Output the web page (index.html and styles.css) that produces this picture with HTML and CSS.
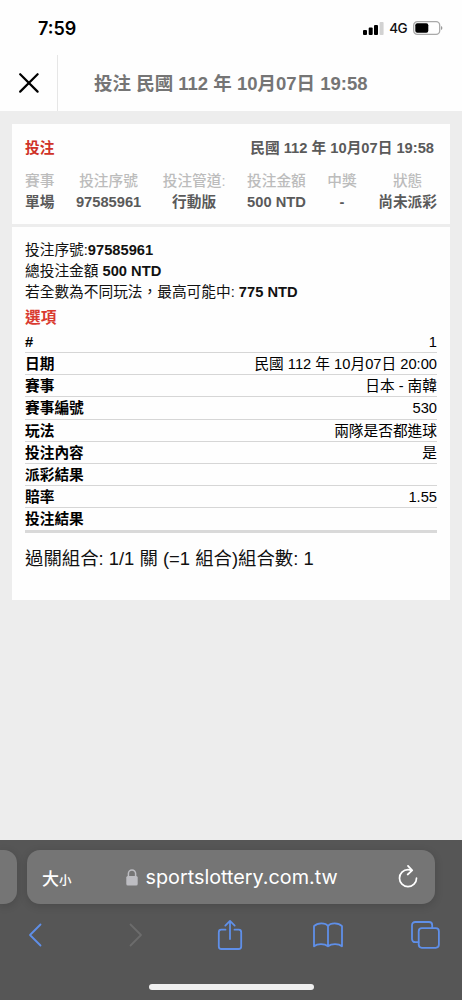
FILE: index.html
```
<!DOCTYPE html>
<html lang="zh-Hant">
<head>
    <meta charset="UTF-8">
    <meta name="viewport" content="width=device-width, initial-scale=1.0">
    <title>投注</title>
    <link rel="stylesheet" href="styles.css">
</head>
<body>
    <div class="status-bar">
        <span class="time">7:59</span>
        <div class="status-icons">
            <svg class="signal" width="21" height="14" viewBox="0 0 21 14">
                <rect x="0" y="9" width="4" height="5" rx="1"/>
                <rect x="5.7" y="6.6" width="4" height="7.4" rx="1"/>
                <rect x="11" y="4" width="4" height="10" rx="1"/>
                <rect x="16.6" y="1" width="4" height="13" rx="1" fill="#d2d2d2"/>
            </svg>
            <span class="network">4G</span>
            <svg class="battery" width="30" height="14" viewBox="0 0 30 14">
                <rect x="0.7" y="0.7" width="26" height="12.6" rx="3.6" fill="none" stroke="#a9a9a9" stroke-width="1.3"/>
                <rect x="2.3" y="2.3" width="13" height="9.4" rx="2"/>
                <path d="M28 5v4q1.4-.6 1.4-2T28 5z" fill="#999"/>
            </svg>
        </div>
    </div>

    <header class="page-header">
        <div class="close-btn">
            <svg width="20" height="20" viewBox="0 0 20 20" fill="none" stroke="#000" stroke-width="2.2" stroke-linecap="round">
                <path d="M1.2 1.2l17.4 17.4M18.6 1.2L1.2 18.6"/>
            </svg>
        </div>
        <h1 class="page-title">投注 民國 112 年 10月07日 19:58</h1>
    </header>

    <main class="content">
        <section class="summary">
            <div class="summary-head">
                <span class="red">投注</span>
                <span>民國 112 年 10月07日 19:58</span>
            </div>
            <div class="summary-cols">
                <div class="col"><span class="label">賽事</span><span class="value">單場</span></div>
                <div class="col"><span class="label">投注序號</span><span class="value">97585961</span></div>
                <div class="col"><span class="label">投注管道:</span><span class="value">行動版</span></div>
                <div class="col"><span class="label">投注金額</span><span class="value">500 NTD</span></div>
                <div class="col"><span class="label">中獎</span><span class="value">-</span></div>
                <div class="col"><span class="label">狀態</span><span class="value">尚未派彩</span></div>
            </div>
        </section>

        <section class="details">
            <p>投注序號:<b>97585961</b></p>
            <p>總投注金額 <b>500 NTD</b></p>
            <p>若全數為不同玩法，最高可能中: <b>775 NTD</b></p>
            <h2 class="options-title">選項</h2>

            <div class="options">
                <div class="row"><b>#</b><span>1</span></div>
                <div class="row"><b>日期</b><span>民國 112 年 10月07日 20:00</span></div>
                <div class="row"><b>賽事</b><span>日本 - 南韓</span></div>
                <div class="row"><b>賽事編號</b><span>530</span></div>
                <div class="row"><b>玩法</b><span>兩隊是否都進球</span></div>
                <div class="row"><b>投注內容</b><span>是</span></div>
                <div class="row"><b>派彩結果</b><span></span></div>
                <div class="row"><b>賠率</b><span>1.55</span></div>
                <div class="row"><b>投注結果</b><span></span></div>
            </div>

            <div class="combo">過關組合: 1/1 關 (=1 組合)組合數: 1</div>
        </section>
    </main>

    <footer class="browser-bar">
        <div class="tabs">
            <div class="prev-tab"></div>
            <div class="address">
                <span class="text-size">大<small>小</small></span>
                <div class="url">
                    <svg width="12" height="17" viewBox="0 0 12 17">
                        <path d="M2.4 8V4.6a3.6 3.6 0 0 1 7.2 0V8" fill="none" stroke="#bdbdc2" stroke-width="1.5"/>
                        <rect x="0.3" y="7" width="11.4" height="9.6" rx="1.6" fill="#bdbdc2"/>
                    </svg>
                    <span>sportslottery.com.tw</span>
                </div>
                <svg class="reload" width="20" height="24" viewBox="0 0 20 24" fill="none" stroke="#fff" stroke-width="1.7" stroke-linecap="round" stroke-linejoin="round">
                    <path d="M13.5 5.4C12.5 4.9 11.3 4.7 10 4.7A8.5 8.5 0 1 0 18.5 13.2"/>
                    <path d="M10 .9l4.2 4.5-4.5 4.1"/>
                </svg>
            </div>
        </div>

        <nav class="toolbar">
            <span class="tool"><svg width="14" height="24" viewBox="0 0 14 24"><path d="M12.5 1.5L2 12l10.5 10.5"/></svg></span>
            <span class="tool disabled"><svg width="14" height="24" viewBox="0 0 14 24"><path d="M1.5 1.5L12 12 1.5 22.5"/></svg></span>
            <span class="tool">
                <svg width="26" height="32" viewBox="0 0 26 32">
                    <path d="M8.5 10.7H4.3a2.5 2.5 0 0 0-2.5 2.5v14.3a2.5 2.5 0 0 0 2.5 2.5h17.4a2.5 2.5 0 0 0 2.5-2.5V13.2a2.5 2.5 0 0 0-2.5-2.5h-4.2"/>
                    <path d="M13 20V2M8.3 6.6L13 1.9l4.7 4.7"/>
                </svg>
            </span>
            <span class="tool">
                <svg width="30" height="26" viewBox="0 0 30 26">
                    <path d="M15 4.2C12.5 .4 4.5 .4 1 4.2V24.3C4.5 21.4 11.5 21.4 15 24.3C18.5 21.4 25.5 21.4 29 24.3V4.2C25.5 .4 17.5 .4 15 4.2V24.3"/>
                </svg>
            </span>
            <span class="tool">
                <svg width="29" height="28" viewBox="0 0 29 28">
                    <path d="M7.5 21.2H4.2A3.2 3.2 0 0 1 1 18V4.2A3.2 3.2 0 0 1 4.2 1H18a3.2 3.2 0 0 1 3.2 3.2V7"/>
                    <rect x="7.7" y="7.2" width="20.2" height="19.6" rx="3.2"/>
                </svg>
            </span>
        </nav>

        <div class="home-indicator"></div>
    </footer>
</body>
</html>
```
FILE: styles.css
```
* {
    box-sizing: border-box;
}

body {
    margin: 0;
    height: 1000px;
    display: flex;
    flex-direction: column;
    background: #ededed;
    color: #111;
    font-family: "Liberation Sans", "Noto Sans CJK TC", sans-serif;
    font-size: 14.7px;
    overflow: hidden;
}

h1, h2, p {
    margin: 0;
}

/* Status bar */
.status-bar {
    height: 55px;
    display: flex;
    justify-content: space-between;
    align-items: center;
    padding: 0 19px 0 38px;
    background: #fefefe;
}

.time {
    padding-top: 1px;
    font-family: Inter, sans-serif;
    font-size: 18px;
    font-weight: 600;
    color: #000;
}

.status-icons {
    display: flex;
    align-items: center;
}

.network {
    margin: 1px 6px 0 5px;
    font-family: Inter, sans-serif;
    font-size: 13.5px;
    font-weight: 500;
    letter-spacing: -0.6px;
}

/* Header */
.page-header {
    height: 56px;
    display: flex;
    background: #fefefe;
}

.close-btn {
    width: 58px;
    display: flex;
    align-items: center;
    justify-content: center;
    border-right: 1px solid #e6e6e6;
}

.page-title {
    padding-left: 36px;
    line-height: 57px;
    font-size: 18.5px;
    font-weight: bold;
    color: #757575;
    white-space: nowrap;
}

/* Bet card */
.content {
    flex: 1;
    padding: 13px 12px 0;
}

.summary,
.details {
    background: #fefefe;
    padding: 0 13px;
}

.summary {
    height: 100px;
    padding-top: 14px;
    color: #5a5a5a;
    font-weight: bold;
}

.summary-head {
    display: flex;
    justify-content: space-between;
    padding-right: 3px;
    height: 33px;
    line-height: 21px;
}

.red {
    color: #cf3227;
}

.summary-cols {
    display: flex;
    justify-content: space-between;
}

.col {
    display: flex;
    flex-direction: column;
    align-items: center;
    line-height: 21px;
}

.col span {
    height: 21px;
}

.label {
    color: #bcbcbc;
    font-weight: 500;
}

.details {
    height: 373px;
    margin-top: 3px;
    padding-top: 13px;
}

.details p {
    height: 21px;
    line-height: 21px;
    white-space: nowrap;
}

.options-title {
    height: 28px;
    line-height: 30px;
    font-size: 15.7px;
    color: #d93a30;
}

.options {
    border-bottom: 3px solid #d9d9d9;
}

.row {
    display: flex;
    justify-content: space-between;
    height: 22.15px;
    line-height: 23px;
    color: #000;
    border-bottom: 1px solid #d6d6d6;
}

.row:last-child {
    border-bottom: 0;
}

.combo {
    margin-top: 14px;
    line-height: 24px;
    font-size: 18.4px;
    white-space: nowrap;
}

/* Browser bar */
.browser-bar {
    height: 160px;
    padding-top: 10px;
    background: #565656;
    display: flex;
    flex-direction: column;
    align-items: center;
}

.tabs {
    align-self: stretch;
    display: flex;
    gap: 10px;
}

.prev-tab {
    width: 17px;
    height: 54px;
    border-radius: 0 13px 13px 0;
    background: #757575;
    box-shadow: 0 2px 8px rgba(0, 0, 0, 0.15);
}

.address {
    width: 408px;
    height: 54px;
    padding: 0 17px 0 15px;
    display: flex;
    align-items: center;
    border-radius: 13px;
    background: #757575;
    color: #fff;
    box-shadow: 0 2px 8px rgba(0, 0, 0, 0.15);
}

.text-size {
    font-size: 17px;
    font-weight: 500;
}

.text-size small {
    font-size: 12.5px;
}

.url {
    margin-left: 54px;
    display: flex;
    align-items: center;
    gap: 8px;
    font-family: Inter, sans-serif;
    font-size: 19.8px;
}

.reload {
    margin-left: auto;
}

.toolbar {
    align-self: stretch;
    height: 61px;
    padding: 0 22px 0 20px;
    display: flex;
    align-items: center;
    justify-content: space-between;
}

.tool {
    width: 30px;
    display: flex;
    justify-content: center;
    color: #5f8fe8;
}

.tool svg {
    fill: none;
    stroke: currentColor;
    stroke-width: 1.8;
    stroke-linecap: round;
    stroke-linejoin: round;
}

.tool.disabled {
    padding-left: 6px;
    color: #6c6c6c;
}

.home-indicator {
    width: 165px;
    height: 6px;
    margin-top: 19px;
    border-radius: 3px;
    background: #efefef;
}
```
